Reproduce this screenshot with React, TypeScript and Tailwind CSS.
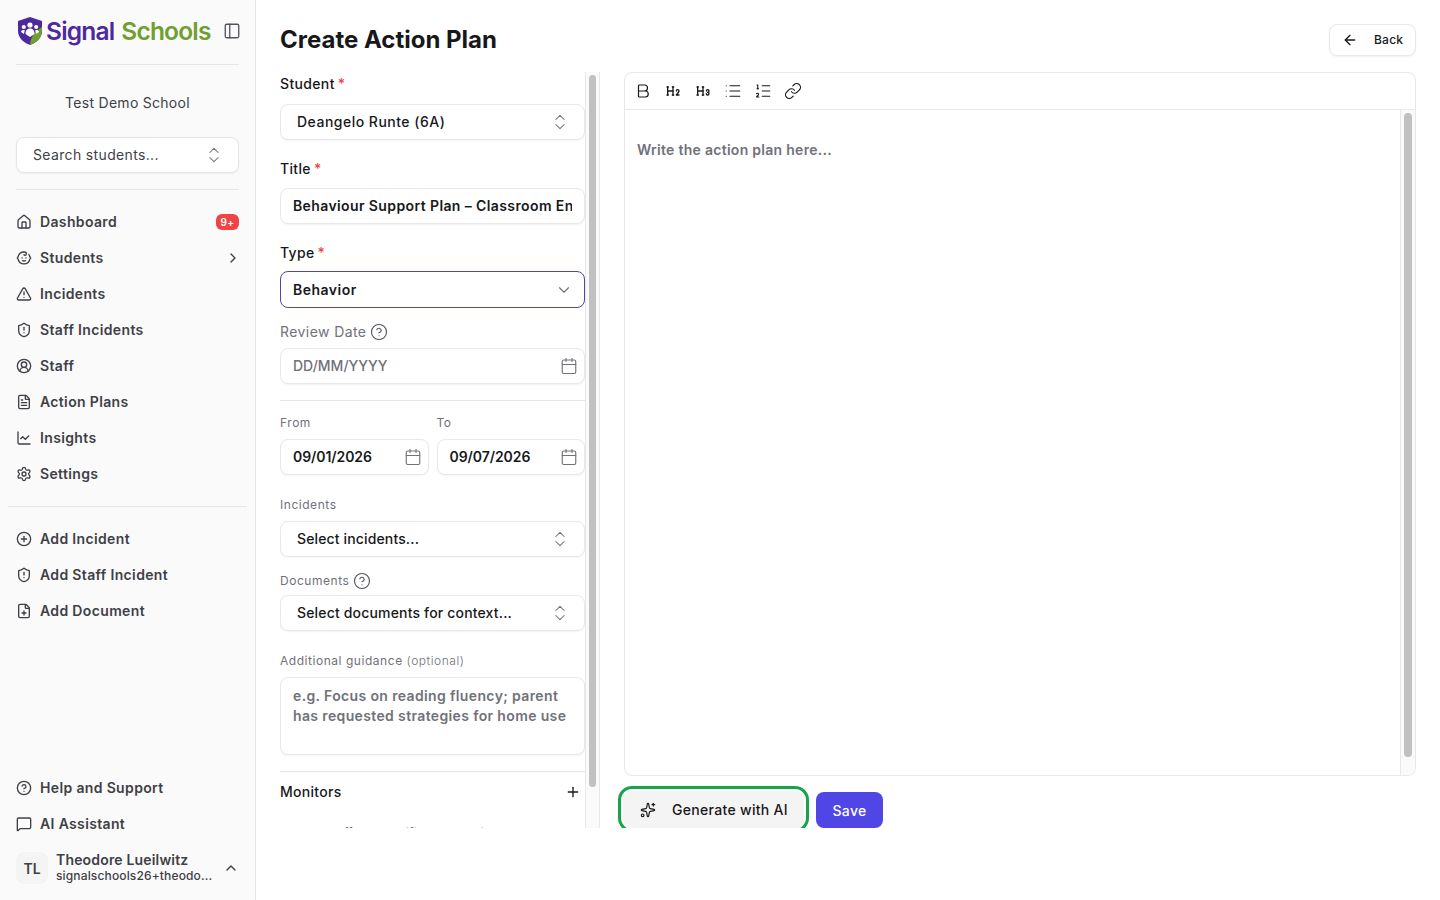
import type { ReactNode } from 'react'
import {
  ArrowLeft,
  Baby,
  Bold,
  Calendar,
  ChartLine,
  ChevronDown,
  ChevronRight,
  ChevronsUpDown,
  ChevronUp,
  CircleHelp,
  CirclePlus,
  CircleUserRound,
  FilePlus,
  FileText,
  House,
  Link,
  List,
  ListOrdered,
  MessageSquare,
  PanelLeft,
  Plus,
  Settings,
  ShieldAlert,
  Sparkles,
  TriangleAlert,
} from 'lucide-react'
import type { LucideIcon } from 'lucide-react'
import { TbH2, TbH3 } from 'react-icons/tb'

const MAIN_NAV: { label: string; icon: LucideIcon; badge?: string; chevron?: boolean }[] = [
  { label: 'Dashboard', icon: House, badge: '9+' },
  { label: 'Students', icon: Baby, chevron: true },
  { label: 'Incidents', icon: TriangleAlert },
  { label: 'Staff Incidents', icon: ShieldAlert },
  { label: 'Staff', icon: CircleUserRound },
  { label: 'Action Plans', icon: FileText },
  { label: 'Insights', icon: ChartLine },
  { label: 'Settings', icon: Settings },
]

const ADD_NAV = [
  { label: 'Add Incident', icon: CirclePlus },
  { label: 'Add Staff Incident', icon: ShieldAlert },
  { label: 'Add Document', icon: FilePlus },
]

const FOOT_NAV = [
  { label: 'Help and Support', icon: CircleHelp },
  { label: 'AI Assistant', icon: MessageSquare },
]

function Logo() {
  return (
    <svg width="26" height="30" viewBox="0 0 26 30" className="shrink-0">
      <path d="M13 1 L25 5 V15 C25 22 19 27 13 29 C7 27 1 22 1 15 V5 Z" fill="#4c2a9e" />
      <path d="M25 11 V15 C25 22 19 27 13 29 C13 22 18 15 25 11 Z" fill="#6f9f2f" />
      <circle cx="13" cy="9" r="2.6" fill="#fff" />
      <circle cx="6.8" cy="11" r="2.1" fill="#fff" />
      <circle cx="19.2" cy="11" r="2.1" fill="#fff" />
      <path d="M8.5 18 C8.5 14 10.5 12.5 13 12.5 C15.5 12.5 17.5 14 17.5 18 L13 21 Z" fill="#fff" />
      <path d="M4 16 C4 14.5 5.5 14 7 14 L8 14.5 C7.3 15.5 7 17 7 18 Z" fill="#fff" />
      <path d="M22 16 C22 14.5 20.5 14 19 14 L18 14.5 C18.7 15.5 19 17 19 18 Z" fill="#fff" />
    </svg>
  )
}

function NavRow({
  label,
  icon: Icon,
  badge,
  chevron,
}: {
  label: string
  icon: LucideIcon
  badge?: string
  chevron?: boolean
}) {
  return (
    <div className="flex h-9 items-center gap-2 text-[14px] font-semibold tracking-[0.025em] text-[#3f3f46]">
      <Icon className="size-4 shrink-0 text-[#3f3f46]" />
      <span className="flex-1 truncate pb-[2px]">{label}</span>
      {badge ? (
        <span className="flex h-4 w-[23px] items-center justify-center rounded-[6px] bg-[#ef4444] text-[10px] font-semibold text-white">
          {badge}
        </span>
      ) : null}
      {chevron ? <ChevronRight className="mr-[-2px] size-4 text-[#3f3f46]" /> : null}
    </div>
  )
}

function Sidebar() {
  return (
    <aside className="flex h-full w-[256px] shrink-0 flex-col border-r border-[#e5e5e5] bg-[#fafafa]">
      <div className="mx-4 flex h-[65px] items-start justify-between border-b border-[#e5e5e5] pt-[16px]">
        <div className="flex items-center gap-[3px] pl-[1px] text-[24.5px] font-semibold leading-[30px] tracking-[-0.033em]">
          <Logo />
          <span className="text-[#4c2a9e]">Signal</span>
          <span className="ml-[4px] text-[#6f9f2f]">Schools</span>
        </div>
        <PanelLeft className="mr-[-2px] mt-[6px] size-[18px] text-[#52525b]" strokeWidth={1.75} />
      </div>
      <div className="mt-[28px] text-center text-[14px] font-normal leading-5 tracking-[0.02em] text-[#3f3f46]">
        Test Demo School
      </div>
      <div className="mx-4 mt-[24px] flex h-9 items-center justify-between rounded-lg border border-[#e5e5e5] bg-white pl-4 pr-[14px] text-[14px] tracking-[0.025em] text-[#3f3f46] shadow-xs">
        <span className="pb-[2px]">Search students...</span>
        <ChevronsUpDown className="size-5 text-[#71717a]" strokeWidth={1.25} />
      </div>
      <div className="mx-4 mt-4 h-px bg-[#e5e5e5]" />
      <nav className="mx-4 mt-[14px]">
        {MAIN_NAV.map((item) => (
          <NavRow key={item.label} {...item} />
        ))}
      </nav>
      <div className="mx-2 mt-[14px] h-px bg-[#e5e5e5]" />
      <nav className="mx-4 mt-[14px]">
        {ADD_NAV.map((item) => (
          <NavRow key={item.label} {...item} />
        ))}
      </nav>
      <nav className="mx-4 mt-auto">
        {FOOT_NAV.map((item) => (
          <NavRow key={item.label} {...item} />
        ))}
      </nav>
      <div className="mx-4 mb-4 mt-[10px] flex h-8 items-center gap-2 text-[#3f3f46]">
        <div className="flex size-8 shrink-0 items-center justify-center rounded-lg bg-[#f4f4f5] text-[14px] font-semibold">
          TL
        </div>
        <div className="min-w-0 flex-1">
          <div className="truncate text-[14px] font-semibold leading-[16px] tracking-[0.012em]">
            Theodore Lueilwitz
          </div>
          <div className="truncate text-[12px] font-medium leading-[16px] tracking-[0.012em]">
            signalschools26+theodo...
          </div>
        </div>
        <ChevronUp className="size-4 shrink-0" />
      </div>
    </aside>
  )
}

function Label({ children, required }: { children: ReactNode; required?: boolean }) {
  return (
    <div className="flex h-5 items-center gap-[3px] pb-[2px] text-[14px] font-medium tracking-[0.025em] text-[#18181b]">
      {children}
      {required ? <span className="text-[#ef4444]">*</span> : null}
    </div>
  )
}

function SmallLabel({ children }: { children: ReactNode }) {
  return <div className="h-4 text-[12px] font-normal leading-4 tracking-[0.045em] text-[#71717a]">{children}</div>
}

function Field({
  children,
  icon,
  className = '',
}: {
  children: ReactNode
  icon?: ReactNode
  className?: string
}) {
  return (
    <div
      className={`flex h-9 items-center justify-between rounded-lg border border-[#e8e8e8] bg-white text-[14px] shadow-xs ${className}`}
    >
      {children}
      {icon}
    </div>
  )
}

function SelectField({ value, tracking }: { value: string; tracking: string }) {
  return (
    <Field
      className="pl-4 pr-[14px]"
      icon={<ChevronsUpDown className="size-5 text-[#71717a]" strokeWidth={1.25} />}
    >
      <span className={`pb-[2px] font-medium text-[#18181b] ${tracking}`}>{value}</span>
    </Field>
  )
}

function DateField({ value }: { value: string }) {
  return (
    <Field
      className="pl-3 pr-[6px]"
      icon={<Calendar className="size-[18px] text-[#71717a]" strokeWidth={1.5} />}
    >
      <span className="pb-[2px] font-semibold tracking-[-0.005em] text-[#18181b]">{value}</span>
    </Field>
  )
}

function FormColumn() {
  return (
    <div className="flex h-full w-[320px] shrink-0 overflow-hidden">
      <div className="w-[305px] shrink-0 pt-[2px]">
        <Label required>Student</Label>
        <div className="mt-[10px]">
          <SelectField value="Deangelo Runte (6A)" tracking="tracking-[0.035em]" />
        </div>

        <div className="mt-[19px]">
          <Label required>Title</Label>
        </div>
        <Field className="mt-[9px] overflow-hidden pl-3 pr-3">
          <span className="overflow-hidden whitespace-nowrap pb-[2px] font-semibold tracking-[0.028em] text-[#18181b]">
            Behaviour Support Plan – Classroom Engagement
          </span>
        </Field>

        <div className="mt-[19px]">
          <Label required>Type</Label>
        </div>
        <div className="mt-[8px] flex h-[37px] items-center justify-between rounded-lg border border-[#4f46a5] bg-white pl-3 pr-[11px] text-[14px] font-semibold tracking-[0.035em] text-[#18181b]">
          <span>Behavior</span>
          <ChevronDown className="size-[18px] text-[#71717a]" strokeWidth={1.5} />
        </div>

        <div className="mt-[14px] flex h-5 items-center gap-[4px] text-[14px] tracking-[0.03em] text-[#71717a]">
          <span className="pb-[2px]">Review Date</span>
          <CircleHelp className="size-[18px] text-[#52525b]" strokeWidth={1.5} />
        </div>
        <Field
          className="mt-[6px] pl-3 pr-[6px]"
          icon={<Calendar className="size-[18px] text-[#71717a]" strokeWidth={1.5} />}
        >
          <span className="pb-[2px] font-medium tracking-[0em] text-[#71717a]">DD/MM/YYYY</span>
        </Field>

        <div className="mt-4 h-px bg-[#e5e5e5]" />

        <div className="mt-[14px] flex gap-2">
          <div className="flex-1">
            <SmallLabel>From</SmallLabel>
            <div className="mt-2">
              <DateField value="09/01/2026" />
            </div>
          </div>
          <div className="flex-1">
            <SmallLabel>To</SmallLabel>
            <div className="mt-2">
              <DateField value="09/07/2026" />
            </div>
          </div>
        </div>

        <div className="mt-[22px]">
          <SmallLabel>Incidents</SmallLabel>
        </div>
        <div className="mt-2">
          <SelectField value="Select incidents..." tracking="tracking-[0.01em]" />
        </div>

        <div className="mt-[16px] flex h-4 items-center gap-[4px] text-[12px] tracking-[0.045em] text-[#71717a]">
          Documents
          <CircleHelp className="size-[18px] text-[#52525b]" strokeWidth={1.5} />
        </div>
        <div className="mt-[6px]">
          <SelectField value="Select documents for context..." tracking="tracking-[0.012em]" />
        </div>

        <div className="mt-[22px]">
          <SmallLabel>
            Additional guidance <span className="font-light">(optional)</span>
          </SmallLabel>
        </div>
        <div className="mt-2 h-[78px] rounded-lg border border-[#e8e8e8] bg-white px-3 py-[8px] text-[14px] font-semibold leading-5 tracking-[0.026em] text-[#71717a] shadow-xs">
          e.g. Focus on reading fluency; parent has requested strategies for home use
        </div>

        <div className="mt-4 h-px bg-[#e5e5e5]" />

        <div className="mt-[10px] flex h-5 items-center justify-between pr-[4px] text-[14px] font-medium tracking-[0.02em] text-[#18181b]">
          <span className="pb-[2px]">Monitors</span>
          <Plus className="size-4" />
        </div>
        <div className="mt-[23px] whitespace-nowrap text-[12px] leading-4 text-[#71717a]">
          Choose staff to be notified about this plan's updates
        </div>
      </div>
      <div className="h-full w-[15px] shrink-0 border-x border-[#e8e8e8] bg-[#fafafa] px-[3px] pt-[3px]">
        <div className="h-[712px] rounded-full bg-[#c1c1c1]" />
      </div>
    </div>
  )
}

function ToolButton({ children }: { children: ReactNode }) {
  return <div className="flex w-[30px] items-center justify-center">{children}</div>
}

function EditorColumn() {
  return (
    <div className="flex min-w-0 flex-1 flex-col">
      <div className="flex h-[704px] shrink-0 flex-col overflow-hidden rounded-lg border border-[#e8e8e8]">
        <div className="flex h-[37px] shrink-0 items-center border-b border-[#e8e8e8] pl-[3px] text-[#18181b]">
          <ToolButton>
            <Bold className="size-[18px]" strokeWidth={1.6} />
          </ToolButton>
          <ToolButton>
            <TbH2 className="size-4" />
          </ToolButton>
          <ToolButton>
            <TbH3 className="size-4" />
          </ToolButton>
          <ToolButton>
            <List className="size-[18px]" strokeWidth={1.5} />
          </ToolButton>
          <ToolButton>
            <ListOrdered className="size-[18px]" strokeWidth={1.5} />
          </ToolButton>
          <ToolButton>
            <Link className="size-[18px]" strokeWidth={1.6} />
          </ToolButton>
        </div>
        <div className="flex min-h-0 flex-1">
          <div className="flex-1 px-3 pt-[30px] text-[14px] font-semibold leading-5 tracking-[0.02em] text-[#71717a]">
            Write the action plan here...
          </div>
          <div className="h-full w-[15px] shrink-0 border-l border-[#e8e8e8] bg-[#fafafa] px-[3px] pt-[3px]">
            <div className="h-[644px] rounded-full bg-[#c1c1c1]" />
          </div>
        </div>
      </div>
      <div className="ml-[-6px] mt-[10px] flex items-start gap-[7px]">
        <div className="rounded-[14px] border-[3px] border-[#16a34a] p-[2px] pb-0">
          <div className="flex h-[38px] w-[181px] items-center gap-[16px] rounded-lg bg-[#f4f4f5] pl-[17px] text-[14px] font-medium tracking-[0.022em] text-[#18181b]">
            <Sparkles className="size-4" strokeWidth={1.75} />
            <span className="pb-[2px]">Generate with AI</span>
          </div>
        </div>
        <div className="mt-[6px] flex h-9 w-[67px] items-center justify-center rounded-lg bg-[#4f46e5] text-[14px] font-medium tracking-[0.02em] text-white">
          Save
        </div>
      </div>
    </div>
  )
}

export default function App() {
  return (
    <div className="flex h-screen w-full overflow-hidden bg-white font-['Inter','Noto_Sans',sans-serif]">
      <Sidebar />
      <main className="flex min-w-0 flex-1 flex-col">
        <header className="flex h-[72px] shrink-0 items-start justify-between px-6 pt-6">
          <h1 className="text-[24px] font-bold leading-[32px] tracking-[0em] text-[#18181b]">
            Create Action Plan
          </h1>
          <div className="flex h-8 w-[87px] items-center gap-[16px] rounded-lg border border-[#e8e8e8] bg-white pl-3 text-[12px] font-medium tracking-[0.02em] text-[#18181b] shadow-xs">
            <ArrowLeft className="size-4" />
            Back
          </div>
        </header>
        <div className="mx-6 flex h-[756px] gap-6 overflow-hidden">
          <FormColumn />
          <EditorColumn />
        </div>
      </main>
    </div>
  )
}
